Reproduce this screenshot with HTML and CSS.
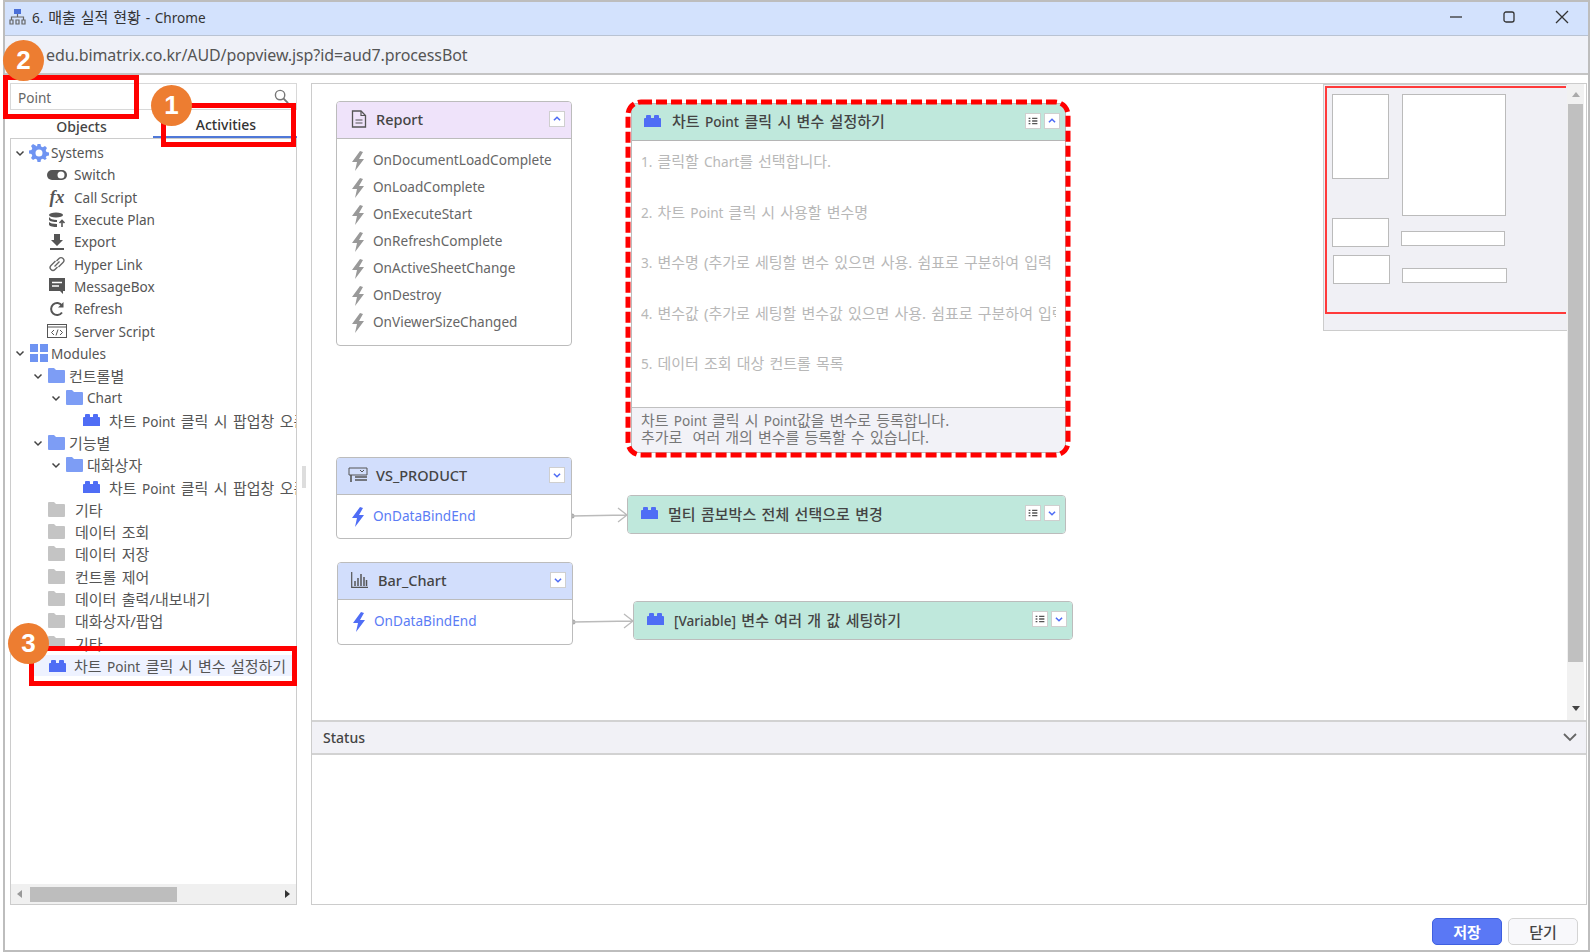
FILE: index.html
```html
<!DOCTYPE html>
<html lang="ko">
<head>
<meta charset="utf-8">
<title>6. 매출 실적 현황 - Chrome</title>
<link rel="stylesheet" href="styles.css">
</head>
<body>
<svg class="defs" width="0" height="0">
  <defs>
    <symbol id="lego" viewBox="0 0 17 12"><path d="M0 12V4q0-1 1-1h1V1q0-1 1-1h3q1 0 1 1v2h3V1q0-1 1-1h3q1 0 1 1v2h1q1 0 1 1v8z"/></symbol>
    <symbol id="folder" viewBox="0 0 17 15"><path d="M0 1q0-1 1-1h5l2 2h8q1 0 1 1v11q0 1-1 1H1q-1 0-1-1z"/></symbol>
    <symbol id="bolt" viewBox="0 0 14 20"><path d="M9 0 1 11h5l-2 9 9-12H8l4-7z"/></symbol>
    <symbol id="up" viewBox="0 0 16 16"><path d="M4.500 9.500 8 6l3.500 3.500" fill="none" stroke-width="1.800"/></symbol>
    <symbol id="down" viewBox="0 0 16 16"><path d="M4.500 6.500 8 10l3.500-3.500" fill="none" stroke-width="1.800"/></symbol>
    <symbol id="list" viewBox="0 0 16 16"><path d="M3 5h2M7 5h6M3 8h2M7 8h6M3 11h2M7 11h6" fill="none" stroke-width="1.500"/></symbol>
    <symbol id="chev" viewBox="0 0 10 10"><path d="M1.500 3.500 5 7l3.500-3.500" fill="none" stroke-width="1.500"/></symbol>
  </defs>
</svg>

<div class="window">
  <header class="titlebar">
    <svg class="title-icon" viewBox="0 0 17 17"><rect x="5" y="1" width="7" height="5" fill="#4a6fd8"/><path d="M8.500 6v3M2.500 12V9h12v3" fill="none" stroke="#666" stroke-width="1.200"/><path d="M1 12h3v4H1zM7 12h3v4H7zM13 12h3v4h-3z" fill="none" stroke="#666" stroke-width="1.200"/></svg>
    <span class="title-text ko"><span class="lat">6.</span> 매출 실적 현황 <span class="lat">- Chrome</span></span>
    <div class="win-btns">
      <svg class="win-btn" viewBox="0 0 14 14"><path d="M1 7h12" stroke="#333" stroke-width="1.300"/></svg>
      <svg class="win-btn" viewBox="0 0 14 14"><rect x="2" y="2" width="10" height="10" rx="2" fill="none" stroke="#333" stroke-width="1.300"/></svg>
      <svg class="win-btn" viewBox="0 0 14 14"><path d="m1 1 12 12M13 1 1 13" stroke="#333" stroke-width="1.300"/></svg>
    </div>
  </header>
  <div class="urlbar">edu.bimatrix.co.kr/AUD/popview.jsp?id=aud7.processBot</div>

  <main class="content">
    <aside class="left">
      <div class="search">
        <span class="search-text">Point</span>
        <svg class="search-icon" viewBox="0 0 16 16"><circle cx="6.500" cy="6.500" r="5" fill="none" stroke="#777" stroke-width="1.500"/><path d="m10 10 5 5" stroke="#777" stroke-width="2"/></svg>
      </div>
      <div class="tabs">
        <div class="tab">Objects</div>
        <div class="tab tab-active">Activities</div>
      </div>
      <div class="tree">
        <div class="tree-list">
          <div class="row l0"><svg class="tw"><use href="#chev"/></svg>
            <svg class="ic-head" viewBox="0 0 18 18"><path fill="#6f94f2" fill-rule="evenodd" d="M7.500 0h3l.5 2.500 1.800.8L15 2l2 2-1.300 2.200.8 1.800 2.500.5v3l-2.500.5-.8 1.800L17 14l-2 2-2.200-1.300-1.800.8-.5 2.500h-3L7 15.500l-1.800-.8L3 16l-2-2 1.300-2.200-.8-1.800L-1 9.500v-3L1.500 6l.8-1.800L1 2l2-2 2.200 1.300L7 2.500zM9 5.500a3.500 3.500 0 1 0 0 7 3.500 3.500 0 0 0 0-7z"/></svg>
            <span class="head-text">Systems</span></div>
          <div class="row l1"><svg class="ic-sys" viewBox="0 0 20 14"><rect x="0" y="2" width="20" height="10" rx="5" fill="#555"/><circle cx="14" cy="7" r="3.500" fill="#fff"/></svg><span>Switch</span></div>
          <div class="row l1"><span class="ic-sys ic-fx">fx</span><span>Call Script</span></div>
          <div class="row l1"><svg class="ic-sys" viewBox="0 0 20 16"><ellipse cx="9" cy="3" rx="7" ry="2.500" fill="#555"/><path d="M2 5v2.500c0 1.400 3 2.500 7 2.500h1V8C6 8 3 7 2 5zM2 10v2.500C2 14 5 15 9 15h1v-3c-4 0-7-.8-8-2z" fill="#555"/><path d="M15 15V9M12.500 11 15 8.500l2.500 2.500" fill="none" stroke="#555" stroke-width="1.600"/></svg><span>Execute Plan</span></div>
          <div class="row l1"><svg class="ic-sys" viewBox="0 0 20 16"><path d="M7 0h6v6h3l-6 6-6-6h3zM3 14h14v2H3z" fill="#555"/></svg><span>Export</span></div>
          <div class="row l1"><svg class="ic-sys" viewBox="0 0 20 16"><path d="M8.500 5 4 9.500a2.800 2.800 0 0 0 4 4L10.500 11M11.500 11 16 6.500a2.800 2.800 0 0 0-4-4L9.500 5M7.500 10.500 12.500 5.500" fill="none" stroke="#666" stroke-width="1.400"/></svg><span>Hyper Link</span></div>
          <div class="row l1"><svg class="ic-sys" viewBox="0 0 20 16"><path d="M2 0h16v13h-2v3l-3-3H2z" fill="#555"/><path d="M5 4.500h10M5 8h7" stroke="#fff" stroke-width="1.400"/></svg><span>MessageBox</span></div>
          <div class="row l1"><svg class="ic-sys" viewBox="0 0 20 16"><path d="M15 11.500a6 6 0 1 1 0-7" fill="none" stroke="#555" stroke-width="2"/><path d="M16.500 1v5.500H11z" fill="#555"/></svg><span>Refresh</span></div>
          <div class="row l1"><svg class="ic-sys" viewBox="0 0 20 16"><rect x=".5" y="1.500" width="19" height="13" fill="none" stroke="#555"/><path d="M1 4h18" stroke="#555"/><path d="M7 7 4.500 9.500 7 12M13 7l2.500 2.500L13 12M11 6.500 9 12.500" fill="none" stroke="#555"/></svg><span>Server Script</span></div>
          <div class="row l0"><svg class="tw"><use href="#chev"/></svg>
            <svg class="ic-head" viewBox="0 0 18 18"><path fill="#6f94f2" d="M0 0h8v8H0zM10 0h8v8h-8zM0 10h8v8H0zM10 10h8v8h-8z"/></svg>
            <span class="head-text">Modules</span></div>
          <div class="row l1f"><svg class="tw"><use href="#chev"/></svg><svg class="ic-folder blue"><use href="#folder"/></svg><span class="folder-text ko">컨트롤별</span></div>
          <div class="row l2f"><svg class="tw"><use href="#chev"/></svg><svg class="ic-folder blue"><use href="#folder"/></svg><span class="folder-text">Chart</span></div>
          <div class="row l3"><svg class="ic-lego"><use href="#lego"/></svg><span class="ko">차트 <span class="lat">Point</span> 클릭 시 팝업창 오픈</span></div>
          <div class="row l1f"><svg class="tw"><use href="#chev"/></svg><svg class="ic-folder blue"><use href="#folder"/></svg><span class="folder-text ko">기능별</span></div>
          <div class="row l2f"><svg class="tw"><use href="#chev"/></svg><svg class="ic-folder blue"><use href="#folder"/></svg><span class="folder-text ko">대화상자</span></div>
          <div class="row l3"><svg class="ic-lego"><use href="#lego"/></svg><span class="ko">차트 <span class="lat">Point</span> 클릭 시 팝업창 오픈</span></div>
          <div class="row l1"><svg class="ic-folder gray"><use href="#folder"/></svg><span class="ko">기타</span></div>
          <div class="row l1"><svg class="ic-folder gray"><use href="#folder"/></svg><span class="ko">데이터 조회</span></div>
          <div class="row l1"><svg class="ic-folder gray"><use href="#folder"/></svg><span class="ko">데이터 저장</span></div>
          <div class="row l1"><svg class="ic-folder gray"><use href="#folder"/></svg><span class="ko">컨트롤 제어</span></div>
          <div class="row l1"><svg class="ic-folder gray"><use href="#folder"/></svg><span class="ko">데이터 출력/내보내기</span></div>
          <div class="row l1"><svg class="ic-folder gray"><use href="#folder"/></svg><span class="ko">대화상자/팝업</span></div>
          <div class="row l1"><svg class="ic-folder gray"><use href="#folder"/></svg><span class="ko">기타</span></div>
          <div class="row l1 selected"><svg class="ic-lego"><use href="#lego"/></svg><span class="ko">차트 <span class="lat">Point</span> 클릭 시 변수 설정하기</span></div>
        </div>
        <div class="hscroll">
          <span class="arrow-l"></span>
          <div class="hthumb-track"><div class="hthumb"></div></div>
          <span class="arrow-r"></span>
        </div>
      </div>
    </aside>

    <div class="splitter"><span class="grip"></span></div>

    <section class="right">
      <div class="stage">
        <div class="canvas">
          <svg class="links" viewBox="0 0 1255 636">
            <circle cx="260" cy="432" r="2.500" fill="#aaa"/>
            <path d="M260 432l55-1M306 424l9 7-9 7" fill="none" stroke="#bbb" stroke-width="1.300"/>
            <circle cx="261" cy="538" r="2.500" fill="#aaa"/>
            <path d="M261 538l60-1M312 530l9 7-9 7" fill="none" stroke="#bbb" stroke-width="1.300"/>
          </svg>

          <div class="node n-report">
            <div class="node-head head-purple">
              <svg class="head-icon hi-report" viewBox="0 0 16 18"><path d="M1.500 1h8.500l4.500 4.500V17h-13z" fill="none" stroke="#555" stroke-width="1.300"/><path d="M10 1v4.500h4.500M4.500 10h7M4.500 13h7" fill="none" stroke="#555" stroke-width="1.200"/></svg>
              <span class="node-title">Report</span>
              <svg class="mini"><use href="#up"/></svg>
            </div>
            <ul class="events">
              <li><svg class="bolt"><use href="#bolt"/></svg>OnDocumentLoadComplete</li>
              <li><svg class="bolt"><use href="#bolt"/></svg>OnLoadComplete</li>
              <li><svg class="bolt"><use href="#bolt"/></svg>OnExecuteStart</li>
              <li><svg class="bolt"><use href="#bolt"/></svg>OnRefreshComplete</li>
              <li><svg class="bolt"><use href="#bolt"/></svg>OnActiveSheetChange</li>
              <li><svg class="bolt"><use href="#bolt"/></svg>OnDestroy</li>
              <li><svg class="bolt"><use href="#bolt"/></svg>OnViewerSizeChanged</li>
            </ul>
          </div>

          <div class="node n-vs">
            <div class="node-head head-blue">
              <svg class="head-icon hi-vs" viewBox="0 0 20 16"><path d="M1 1h18v7H1z" fill="none" stroke="#555"/><path d="m12 3 2 2 2-2" fill="none" stroke="#555"/><path d="M3 8v7M7 10h12M7 13h12" fill="none" stroke="#555" stroke-width="1.600"/></svg>
              <span class="node-title">VS_PRODUCT</span>
              <svg class="mini"><use href="#down"/></svg>
            </div>
            <ul class="events one"><li><svg class="bolt"><use href="#bolt"/></svg>OnDataBindEnd</li></ul>
          </div>

          <div class="node n-bar">
            <div class="node-head head-blue">
              <svg class="head-icon hi-bar" viewBox="0 0 17 16"><path d="M.7 0v15.300H17" fill="none" stroke="#555" stroke-width="1.200"/><path d="M4 9v5M7 6v8M10 2v12M13 5v9M15.500 8v6" stroke="#555" stroke-width="1.500"/></svg>
              <span class="node-title">Bar_Chart</span>
              <svg class="mini"><use href="#down"/></svg>
            </div>
            <ul class="events one"><li><svg class="bolt"><use href="#bolt"/></svg>OnDataBindEnd</li></ul>
          </div>

          <div class="node act n-act1">
            <div class="act-head act-head-line">
              <svg class="act-lego"><use href="#lego"/></svg>
              <span class="act-title ko">차트 <span class="lat">Point</span> 클릭 시 변수 설정하기</span>
              <svg class="mini"><use href="#list"/></svg>
              <svg class="mini"><use href="#up"/></svg>
            </div>
            <div class="act-body">
              <p class="ko"><span class="lat">1.</span> 클릭할 <span class="lat">Chart</span>를 선택합니다.</p>
              <p class="ko"><span class="lat">2.</span> 차트 <span class="lat">Point</span> 클릭 시 사용할 변수명</p>
              <p class="ko"><span class="lat">3.</span> 변수명 (추가로 세팅할 변수 있으면 사용. 쉼표로 구분하여 입력</p>
              <p class="ko"><span class="lat">4.</span> 변수값 (추가로 세팅할 변수값 있으면 사용. 쉼표로 구분하여 입력</p>
              <p class="ko"><span class="lat">5.</span> 데이터 조회 대상 컨트롤 목록</p>
            </div>
            <div class="act-foot ko">차트 <span class="lat">Point</span> 클릭 시 <span class="lat">Point</span>값을 변수로 등록합니다.<br>추가로&nbsp; 여러 개의 변수를 등록할 수 있습니다.</div>
          </div>

          <div class="node act n-act2">
            <div class="act-head">
              <svg class="act-lego"><use href="#lego"/></svg>
              <span class="act-title ko">멀티 콤보박스 전체 선택으로 변경</span>
              <svg class="mini"><use href="#list"/></svg>
              <svg class="mini"><use href="#down"/></svg>
            </div>
          </div>

          <div class="node act n-act3">
            <div class="act-head">
              <svg class="act-lego"><use href="#lego"/></svg>
              <span class="act-title ko"><span class="lat">[Variable]</span> 변수 여러 개 값 세팅하기</span>
              <svg class="mini"><use href="#list"/></svg>
              <svg class="mini"><use href="#down"/></svg>
            </div>
          </div>

          <div class="minimap">
            <div class="mm-view"></div>
            <div class="mm mm1"></div>
            <div class="mm mm2"></div>
            <div class="mm mm3"></div>
            <div class="mm mm4"></div>
            <div class="mm mm5"></div>
            <div class="mm mm6"></div>
          </div>
        </div>
        <div class="vscroll">
          <span class="arrow-u"></span>
          <div class="vtrack"><div class="vthumb"></div></div>
          <span class="arrow-d"></span>
        </div>
      </div>
      <div class="status-head">
        <span>Status</span>
        <svg class="status-chev" viewBox="0 0 14 9"><path d="m1 1 6 6 6-6" fill="none" stroke="#666" stroke-width="1.800"/></svg>
      </div>
      <div class="status-body"></div>
    </section>
  </main>

  <footer class="footer">
    <button class="btn btn-primary">저장</button>
    <button class="btn">닫기</button>
  </footer>

  <div class="mark mark-search"></div>
  <div class="mark mark-tab"></div>
  <div class="mark mark-row"></div>
  <svg class="dash" viewBox="0 0 446 359"><rect x="3" y="3" width="440" height="353" rx="13" fill="none" stroke="#f00" stroke-width="5" stroke-dasharray="11 4"/></svg>
  <div class="badge badge-1">1</div>
  <div class="badge badge-2">2</div>
  <div class="badge badge-3">3</div>
</div>
</body>
</html>
```

FILE: styles.css
```css
* { box-sizing: border-box; }
html, body { margin: 0; padding: 0; background: #fff; }
body {
  width: 1590px;
  height: 952px;
  overflow: hidden;
  font-family: "Noto Sans", "Noto Sans CJK KR", sans-serif;
  font-size: 13.600px;
  color: #444;
}
.defs { position: absolute; }

/* Korean runs are set larger with wider spaces; Latin runs inside stay at the body size */
.ko { font-size: 15px; word-spacing: 1.500px; }
.lat { font-size: 13.600px; }

.window {
  position: relative;
  width: 1587px;
  height: 952px;
  margin-left: 3px;
  border: 2px solid #bdbdbd;
  display: flex;
  flex-direction: column;
  background: #fff;
}

/* title + url */
.titlebar {
  height: 34px;
  flex: none;
  display: flex;
  align-items: center;
  background: #d3e2fd;
  border-bottom: 1px solid #b9c3d3;
  padding: 0 0 4px 4px;
}
.title-icon { width: 17px; height: 17px; margin-right: 6px; }
.title-text { color: #333; word-spacing: 1px; }
.win-btns { margin-left: auto; display: flex; gap: 39px; margin-right: 19px; }
.win-btn { width: 14px; height: 14px; display: block; }
.urlbar {
  height: 39px;
  flex: none;
  background: #eff1f8;
  border-bottom: 2px solid #c4c4c4;
  padding-left: 41px;
  line-height: 38px;
  font-size: 16px;
  letter-spacing: -.09px;
  color: #555;
}

/* main */
.content { flex: 1; min-height: 0; display: flex; padding: 8px 1px 0 5px; }
.left { width: 287px; flex: none; display: flex; flex-direction: column; }
.search {
  height: 27px;
  flex: none;
  border: 1px solid #d8d8d8;
  display: flex;
  align-items: center;
  padding: 2px 4px 0 7px;
  justify-content: space-between;
}
.search-text { color: #666; }
.search-icon { width: 15px; height: 15px; margin: -2px 3px 0 0; }
.tabs { height: 28px; flex: none; display: flex; font-size: 14px; }
.tab { width: 143px; text-align: center; line-height: 34px; font-weight: 500; color: #444; }
.tab-active { width: 144px; padding-left: 2px; line-height: 30px; border-bottom: 2px solid #4f78d8; color: #333; }
.tree {
  flex: 1;
  min-height: 0;
  border: 1px solid #ccc;
  display: flex;
  flex-direction: column;
  overflow: hidden;
}
.tree-list { flex: 1; min-height: 0; padding-top: 2.500px; overflow: hidden; }
.row {
  height: 22.3px;
  display: flex;
  align-items: center;
  white-space: nowrap;
  color: #555;
}
.l0 { padding-left: 4px; }
.l1 { padding-left: 36px; }
.l1f { padding-left: 22px; }
.l2f { padding-left: 40px; }
.l3 { padding-left: 72px; }
.selected { background: #eef2ff; margin-left: 22px; padding-left: 16px; margin-right: 4px; height: 21px; margin-top: 1px; }
.tw { width: 10px; height: 10px; stroke: #444; margin-right: 5px; flex: none; }
.ic-head { width: 18px; height: 18px; margin-right: 3px; flex: none; overflow: visible; }
.head-text { color: #555; }
.ic-sys { width: 20px; height: 16px; margin-right: 7px; flex: none; }
.ic-fx { font-family: "Liberation Serif", serif; font-style: italic; font-weight: 700; font-size: 18px; line-height: 16px; color: #555; text-align: center; }
.ic-folder { width: 17px; height: 15px; flex: none; margin-right: 10px; }
.folder-text { margin-left: -6px; }
.blue { fill: #7d9df5; }
.gray { fill: #c4c4c4; margin-left: 1px; }
.ic-lego { width: 17px; height: 12px; fill: #4f6df5; flex: none; margin-right: 9px; }
.selected .ic-lego { margin-right: 8px; }
.hscroll { height: 20px; flex: none; background: #f0f0f0; display: flex; align-items: center; padding: 0 6px; }
.hthumb-track { flex: 1; height: 15px; margin: 0 6px 0 8px; }
.hthumb { width: 147px; height: 15px; background: #bdbdbd; }
.arrow-l { border: 4px solid transparent; border-right: 5px solid #999; border-left: 0; }
.arrow-r { border: 4px solid transparent; border-left: 5px solid #333; border-right: 0; }

.splitter { width: 14px; flex: none; display: flex; align-items: center; justify-content: center; padding-bottom: 27px; }
.grip { width: 4px; height: 22px; background: #ddd; margin-top: -8px; }

/* right */
.right { flex: 1; min-width: 0; display: flex; flex-direction: column; border: 1px solid #ccc; }
.stage { height: 636px; flex: none; display: flex; }
.canvas { position: relative; width: 1255px; flex: none; overflow: hidden; background: #fff; }
.links { position: absolute; left: 0; top: 0; width: 1255px; height: 636px; }
.vscroll { flex: 1; background: #f1f1f1; display: flex; flex-direction: column; align-items: center; margin-right: 2px; padding: 8px 0 9px; }
.vtrack { flex: 1; width: 100%; padding-top: 7px; }
.vthumb { width: 15px; margin: 0 auto; height: 558px; background: #c0c0c0; }
.arrow-u { border: 4px solid transparent; border-bottom: 5px solid #aaa; border-top: 0; }
.arrow-d { border: 4px solid transparent; border-top: 5px solid #444; border-bottom: 0; }
.status-head {
  height: 35px;
  flex: none;
  background: #f1f1f6;
  border-top: 2px solid #d2d2d2;
  border-bottom: 2px solid #d2d2d2;
  display: flex;
  align-items: center;
  justify-content: space-between;
  padding: 0 9px 0 11px;
  font-size: 14px;
  font-weight: 500;
  color: #444;
}
.status-chev { width: 14px; height: 9px; }
.status-body { flex: 1; }

/* nodes */
.node { position: absolute; background: #fff; border: 1.500px solid #bcbcbc; border-radius: 4px; }
.n-report { left: 24px; top: 17px; width: 236px; height: 245px; }
.n-vs { left: 24px; top: 373px; width: 236px; height: 82px; }
.n-bar { left: 25px; top: 478px; width: 236px; height: 83px; }
.n-act1 { left: 319px; top: 19px; width: 435px; height: 350px; display: flex; flex-direction: column; overflow: hidden; }
.n-act2 { left: 315px; top: 411px; width: 439px; height: 39px; overflow: hidden; }
.n-act3 { left: 321px; top: 517px; width: 440px; height: 39px; overflow: hidden; }

.node-head {
  height: 37px;
  display: flex;
  align-items: center;
  border-bottom: 1.500px solid #bcbcbc;
  padding: 0 6px 2px 0;
  border-radius: 3px 3px 0 0;
}
.head-purple { background: #efe3fa; }
.head-blue { background: #d2defc; }
.head-icon { flex: none; }
.hi-report { width: 16px; height: 18px; margin: 0 9px 0 14px; }
.hi-vs { width: 20px; height: 16px; margin: 0 8px 0 11px; }
.hi-bar { width: 17px; height: 16px; margin: 0 10px 0 13px; }
.node-title { flex: 1; font-weight: 500; font-size: 14.500px; color: #444; white-space: nowrap; }
.mini {
  width: 16px;
  height: 16px;
  flex: none;
  background: #fff;
  border: 1px solid #cfcfcf;
  stroke: #4f6df5;
}
.events { list-style: none; margin: 0; padding: 7px 0 0 14px; }
.events li { height: 27px; display: flex; align-items: center; color: #666; white-space: nowrap; }
.bolt { width: 14px; height: 20px; fill: #999; margin-right: 8px; flex: none; margin-top: 2px; }
.events.one { padding-top: 7px; }
.one li { color: #5b7cf5; }
.one .bolt { fill: #4f6df5; }

.act { background: #fff; }
.act-head { height: 37px; flex: none; display: flex; align-items: center; background: #bfe8dc; padding: 0 5px 2px 12px; gap: 3px; }
.act-head-line { border-bottom: 1.500px solid #b5b5b5; padding-bottom: 3px; }
.act-lego { width: 17px; height: 12px; fill: #4f6df5; flex: none; margin-right: 8px; }
.n-act2 .act-head, .n-act3 .act-head { padding-left: 13px; padding-bottom: 3px; }
.n-act2 .act-lego, .n-act3 .act-lego { margin-right: 7px; }
.act-title { flex: 1; font-weight: 500; color: #444; white-space: nowrap; }
.act .mini { stroke: #4f6df5; }
.act .mini:nth-last-of-type(2) { stroke: #555; }
.act-body { flex: 1; min-height: 0; padding: 9px 9px 0 9px; overflow: hidden; }
.act-body p { margin: 0; height: 50.500px; line-height: 22px; color: #b8b8b8; white-space: nowrap; overflow: hidden; word-spacing: 1.200px; }
.act-foot { height: 45px; flex: none; background: #f2f2f7; border-top: 1.500px solid #c0c0c0; padding: 4px 9px 0; line-height: 16px; color: #777; white-space: nowrap; word-spacing: 1.200px; }

/* minimap */
.minimap { position: absolute; left: 1011px; top: 0; width: 244px; height: 247px; background: #f0f0f5; border: 1px solid #ccc; border-right: 0; }
.mm-view { position: absolute; left: 1px; top: 1px; width: 241px; height: 228px; border: 2px solid #ff3a3a; border-right: 0; }
.mm { position: absolute; background: #fff; border: 1.500px solid #bbb; }
.mm1 { left: 8px; top: 9px; width: 57px; height: 85px; }
.mm2 { left: 78px; top: 9px; width: 104px; height: 122px; }
.mm3 { left: 8px; top: 133px; width: 57px; height: 29px; }
.mm4 { left: 77px; top: 146px; width: 104px; height: 15px; }
.mm5 { left: 9px; top: 170px; width: 57px; height: 29px; }
.mm6 { left: 78px; top: 183px; width: 105px; height: 15px; }

/* footer */
.footer { height: 45px; flex: none; display: flex; justify-content: flex-end; align-items: flex-start; gap: 6px; padding: 13px 10px 0 0; }
.btn {
  width: 70px;
  height: 27px;
  padding: 0;
  border: 1.500px solid #d4d4d4;
  border-radius: 5px;
  background: #f8f8fb;
  font: 500 15px "Noto Sans CJK KR", sans-serif;
  color: #444;
}
.btn-primary { background: #5a78f5; border-color: #3f60e0; color: #fff; font-weight: 700; }

/* annotations */
.mark { position: absolute; border: 5px solid #f00; pointer-events: none; }
.mark-search { left: -2px; top: 73px; width: 136px; height: 44px; }
.mark-tab { left: 156px; top: 101px; width: 135px; height: 44px; }
.mark-row { left: 24px; top: 644px; width: 268px; height: 40px; }
.dash { position: absolute; left: 620px; top: 97px; width: 446px; height: 359px; }
.badge {
  position: absolute;
  width: 41px;
  height: 41px;
  border-radius: 50%;
  background: #ed7d31;
  color: #fff;
  font: 700 26px/41px "Liberation Sans", sans-serif;
  text-align: center;
}
.badge-1 { left: 146px; top: 83px; }
.badge-2 { left: -2px; top: 38px; }
.badge-3 { left: 3px; top: 621px; }
```
